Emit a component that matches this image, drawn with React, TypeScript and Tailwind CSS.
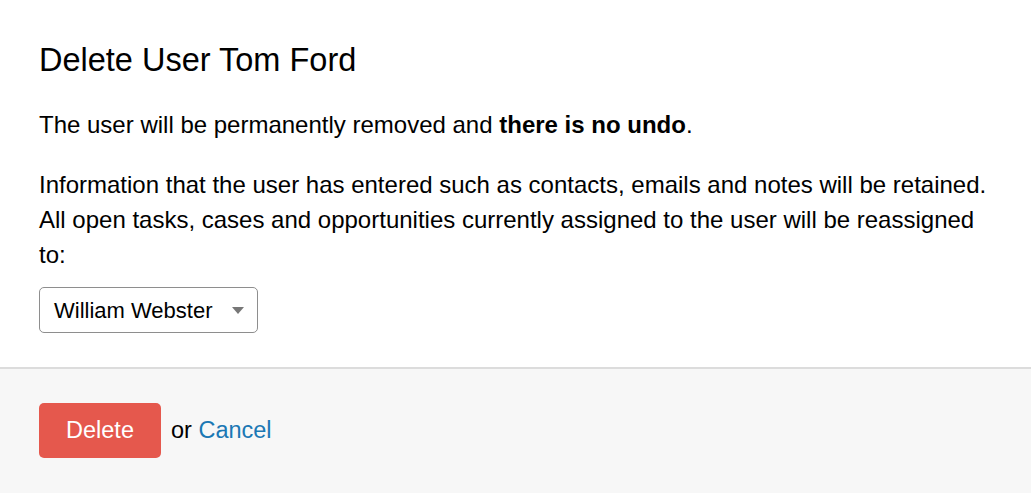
import React from "react";

export default function App() {
  return (
    <div
      className="w-[1031px] h-[493px] bg-white flex flex-col text-black overflow-hidden"
      style={{ fontFamily: '"Liberation Sans", Arial, sans-serif' }}
    >
      {/* Body */}
      <div className="px-[39px] pt-[41px] h-[367px]">
        <h2 className="text-[32.5px] leading-[38px] font-normal">Delete User Tom Ford</h2>
        <p className="mt-[28px] text-[24px] leading-[35px]">
          The user will be permanently removed and <b>there is no undo</b>.
        </p>
        <p className="mt-[25px] text-[24px] leading-[35px]">
          Information that the user has entered such as contacts, emails and notes will be retained.
          <br />
          All open tasks, cases and opportunities currently assigned to the user will be reassigned
          <br />
          to:
        </p>
        <div className="mt-[15px] w-[219px] h-[46px] border border-[#8e8e8e] rounded-[5px] flex items-center justify-between pl-[14px] pr-[13px]">
          <span className="text-[22px]">William Webster</span>
          <svg width="12" height="7" viewBox="0 0 12 7">
            <path d="M0 0 L12 0 L6 7 Z" fill="#777" />
          </svg>
        </div>
      </div>

      {/* Footer */}
      <div className="flex-1 border-t-2 border-[#dcdcdc] bg-[#f7f7f7] px-[39px] pt-[34px]">
        <div className="flex items-center gap-[10px]">
          <button className="w-[122px] h-[55px] rounded-[5px] bg-[#e5584d] text-white text-[23.5px]">
            Delete
          </button>
          <span className="text-[23.5px]">
            or <span className="text-[#1b78b4]">Cancel</span>
          </span>
        </div>
      </div>
    </div>
  );
}
